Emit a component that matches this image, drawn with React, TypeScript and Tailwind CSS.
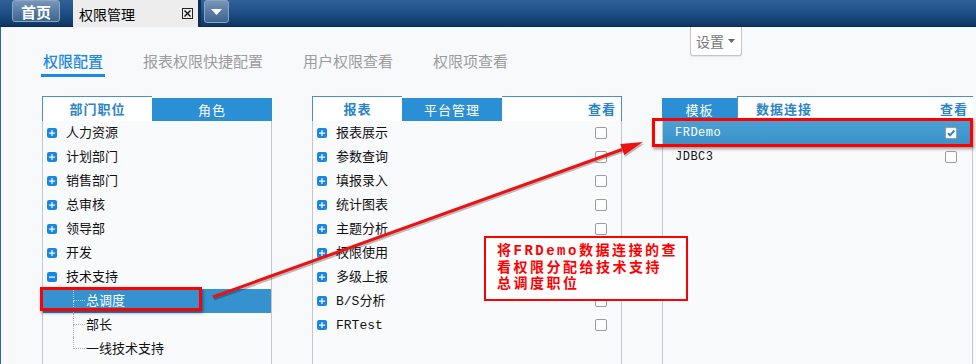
import React from "react";

const mono = "font-['Liberation_Mono','Noto_Sans_CJK_SC',monospace]";

function PlusIcon({ minus = false }: { minus?: boolean }) {
  return (
    <svg width="10" height="10" viewBox="0 0 10 10" className="shrink-0">
      <rect x="0" y="0" width="10" height="10" rx="2" fill="#1a86e4" />
      <rect x="2" y="4.5" width="6" height="1.2" fill="#fff" />
      {!minus && <rect x="4.4" y="2" width="1.2" height="6" fill="#fff" />}
    </svg>
  );
}

function Checkbox({ checked = false }: { checked?: boolean }) {
  return (
    <div className="w-[12px] h-[12px] rounded-[2px] border border-[#9c9c9c] bg-white shrink-0 flex items-center justify-center">
      {checked && (
        <svg width="10" height="10" viewBox="0 0 10 10">
          <path d="M2 5.2 L4 7.4 L8.4 2.4" stroke="#1f7fd8" strokeWidth="1.8" fill="none" />
        </svg>
      )}
    </div>
  );
}

type LeftRow = { t: string; kind: "plus" | "minus" | "child"; last?: boolean; sel?: boolean };

const leftRows: LeftRow[] = [
  { t: "人力资源", kind: "plus" },
  { t: "计划部门", kind: "plus" },
  { t: "销售部门", kind: "plus" },
  { t: "总审核", kind: "plus" },
  { t: "领导部", kind: "plus" },
  { t: "开发", kind: "plus" },
  { t: "技术支持", kind: "minus" },
  { t: "总调度", kind: "child", sel: true },
  { t: "部长", kind: "child" },
  { t: "一线技术支持", kind: "child", last: true },
];

const midRows = ["报表展示", "参数查询", "填报录入", "统计图表", "主题分析", "权限使用", "多级上报", "B/S分析", "FRTest"];

export default function App() {
  return (
    <div className="relative w-[976px] h-[364px] overflow-hidden bg-[#f7f9fb] font-['Noto_Sans_CJK_SC',sans-serif]">
      {/* Top bar */}
      <div className="h-[27px] flex bg-gradient-to-b from-[#2f6299] via-[#1f4f86] to-[#0f3663] border-b border-[#0b2b50]">
        <div className="ml-[12px] w-[48px] h-[22px] rounded-[3px] border border-[#8aa6c4] bg-gradient-to-b from-[#7795b8] to-[#3d6490] flex items-center justify-center text-white font-bold text-[15px] leading-none">
          首页
        </div>
        <div className="ml-[13px] w-[128px] h-[27px] bg-[#ededed] flex items-center pl-[6px] pr-[5px] border-r-[3px] border-[#0d2f57]">
          <span className="text-[14px] text-black leading-none">权限管理</span>
          <div className="ml-auto w-[11px] h-[11px] border border-[#222] flex items-center justify-center">
            <svg width="7" height="7" viewBox="0 0 7 7">
              <path d="M0.5 0.5 L6.5 6.5 M6.5 0.5 L0.5 6.5" stroke="#111" strokeWidth="1.4" />
            </svg>
          </div>
        </div>
        <div className="ml-[3px] w-[25px] h-[23px] rounded-[3px] border border-[#8aa6c4] bg-gradient-to-b from-[#7795b8] to-[#3d6490] flex items-center justify-center">
          <svg width="11" height="6" viewBox="0 0 11 6">
            <path d="M0 0 L11 0 L5.5 6 Z" fill="#fff" />
          </svg>
        </div>
      </div>

      {/* Content */}
      <div className="border-l border-[#2a67a6] h-[337px]">
        <div className="flex items-start">
          <div className="w-[689px] shrink-0 pl-[40px] pt-[24px] flex gap-[36px] text-[15px] leading-[20px]">
            <div className="px-[2px] pb-[3px] border-b-[3px] border-[#1e88e5] text-[#1e88e5] font-medium">权限配置</div>
            <div className="px-[2px] text-[#9c9c9c]">报表权限快捷配置</div>
            <div className="px-[2px] text-[#9c9c9c]">用户权限查看</div>
            <div className="px-[2px] text-[#9c9c9c]">权限项查看</div>
          </div>
          <div className="w-[52px] h-[29px] bg-white border border-t-0 border-[#c4c4c4] rounded-b-[3px] flex items-center pl-[5px] shadow-[0_1px_1px_rgba(0,0,0,0.08)]">
            <span className="text-[14px] text-[#777] leading-none">设置</span>
            <svg width="7" height="4" viewBox="0 0 7 4" className="ml-[4px]">
              <path d="M0 0 L7 0 L3.5 4 Z" fill="#666" />
            </svg>
          </div>
        </div>

        <div className="mt-[19px] pl-[41px] flex gap-[40px] items-start">
          {/* Left panel */}
          <div className="w-[230px] shrink-0">
            <div className="flex items-end h-[25px]">
              <div className="w-[110px] h-[25px] bg-white border-t border-l border-[#4a8fc9] flex items-center justify-center text-[13px] font-bold text-[#2a84c8] tracking-[1px]">
                部门职位
              </div>
              <div className="w-[120px] h-[23px] bg-[#2b8fd6] flex items-center justify-center text-[13px] text-white tracking-[1px]">
                角色
              </div>
            </div>
            <div className={`h-[260px] border border-t-0 border-[#c3c6ca] bg-[#f9fafc] ${mono} text-[13px] text-[#111]`}>
              {leftRows.map((r, i) =>
                r.kind === "child" ? (
                  <div key={i} className={`h-[24px] flex items-stretch pl-[30px] ${r.sel ? "bg-[#3592cf] text-white" : ""}`}>
                    <div className="w-[12px] flex flex-col shrink-0">
                      <div className={`h-[12px] border-l border-b border-dotted ${r.sel ? "border-[#bcd6ea]" : "border-[#b4b4b4]"}`} />
                      <div className={`h-[12px] ${r.last ? "" : "border-l border-dotted"} ${r.sel ? "border-[#bcd6ea]" : "border-[#b4b4b4]"}`} />
                    </div>
                    <span className="self-center ml-[1px] leading-none">{r.t}</span>
                  </div>
                ) : (
                  <div key={i} className="h-[24px] flex items-center pl-[4px]">
                    <PlusIcon minus={r.kind === "minus"} />
                    <span className="ml-[9px] leading-none">{r.t}</span>
                  </div>
                )
              )}
            </div>
          </div>

          {/* Middle panel */}
          <div className="w-[310px] shrink-0">
            <div className="flex items-end h-[25px]">
              <div className="w-[90px] h-[25px] bg-white border-t border-l border-[#4a8fc9] flex items-center justify-center text-[13px] font-bold text-[#2a84c8] tracking-[1px]">
                报表
              </div>
              <div className="w-[100px] h-[23px] bg-[#2b8fd6] flex items-center justify-center text-[13px] text-white tracking-[1px]">
                平台管理
              </div>
              <div className="flex-1 h-[25px] bg-white border-t border-r border-[#4a8fc9] flex items-center justify-end pr-[5px] text-[13px] font-bold text-[#2a84c8] tracking-[1px]">
                查看
              </div>
            </div>
            <div className={`h-[260px] border border-t-0 border-[#c3c6ca] bg-[#f9fafc] ${mono} text-[13px] text-[#111]`}>
              {midRows.map((t, i) => (
                <div key={i} className="h-[24px] flex items-center pl-[4px] pr-[14px]">
                  <PlusIcon />
                  <span className="ml-[9px] leading-none">{t}</span>
                  <div className="ml-auto">
                    <Checkbox />
                  </div>
                </div>
              ))}
            </div>
          </div>

          {/* Right panel */}
          <div className="w-[311px] shrink-0">
            <div className="flex items-end h-[25px]">
              <div className="w-[75px] h-[23px] bg-[#2b8fd6] flex items-center justify-center text-[13px] text-white tracking-[1px]">
                模板
              </div>
              <div className="flex-1 h-[25px] bg-white border-t border-l border-[#4a8fc9] flex items-center pl-[18px] pr-[5px] text-[13px] font-bold text-[#2a84c8] tracking-[1px]">
                <span>数据连接</span>
                <span className="ml-auto">查看</span>
              </div>
            </div>
            <div className={`h-[260px] border border-t-0 border-[#c3c6ca] bg-[#f9fafc] ${mono} text-[12px] tracking-[0.5px] text-[#111]`}>
              <div className="h-[24px] flex items-center pl-[12px] pr-[15px] bg-gradient-to-b from-[#4aa0d3] to-[#3a92c9] text-white">
                <span className="leading-none">FRDemo</span>
                <div className="ml-auto">
                  <Checkbox checked />
                </div>
              </div>
              <div className="h-[24px] flex items-center pl-[12px] pr-[15px]">
                <span className="leading-none">JDBC3</span>
                <div className="ml-auto">
                  <Checkbox />
                </div>
              </div>
            </div>
          </div>
        </div>
      </div>

      {/* Annotation overlays */}
      <svg className="absolute left-0 top-0 pointer-events-none" width="976" height="364">
        <line x1="214" y1="299" x2="623" y2="151" stroke="rgba(0,0,0,0.25)" strokeWidth="3" />
        <polygon points="644,144 625,157 621,146" fill="rgba(0,0,0,0.25)" />
        <line x1="213" y1="297" x2="622" y2="149.5" stroke="#ee1111" strokeWidth="3" />
        <polygon points="643,142 624.3,155.1 620.3,143.9" fill="#ee1111" />
      </svg>

      <div className="absolute left-[40px] top-[287px] w-[162px] h-[24px] border-[3px] border-[#ff0000] shadow-[1px_2px_3px_rgba(0,0,0,0.4)] pointer-events-none" />
      <div className="absolute left-[652px] top-[118px] w-[321px] h-[29px] border-[3px] border-[#ff0000] shadow-[1px_2px_3px_rgba(0,0,0,0.4)] pointer-events-none" />

      <div className="absolute left-[484px] top-[236px] w-[204px] h-[65px] border-2 border-[#ff0000] bg-white pl-[11px] pt-[5px]">
        <div className={`${mono} text-[14px] leading-[16.5px] font-bold text-[#ff0000] tracking-[2.5px] whitespace-nowrap`}>
          将FRDemo数据连接的查
          <br />
          看权限分配给技术支持
          <br />
          总调度职位
        </div>
      </div>
    </div>
  );
}
